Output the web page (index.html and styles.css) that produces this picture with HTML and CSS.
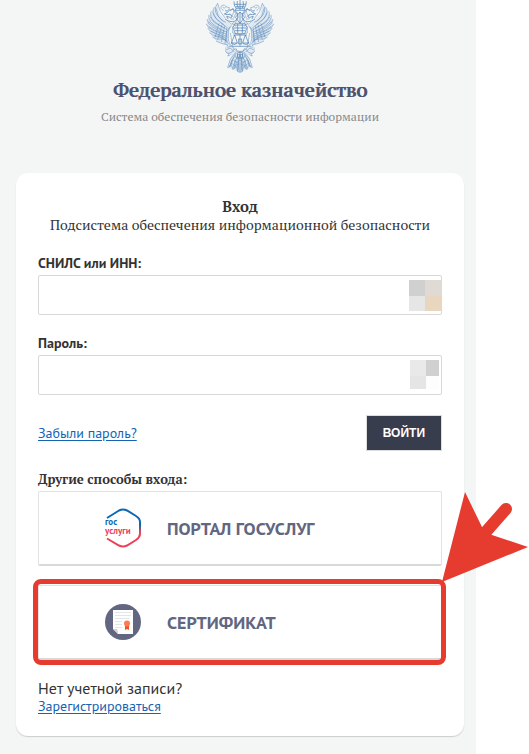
FILE: index.html
```html
<!DOCTYPE html>
<html lang="ru">
<head>
<meta charset="utf-8">
<meta name="viewport" content="width=device-width, initial-scale=1">
<title>Федеральное казначейство</title>
<link rel="stylesheet" href="styles.css">
</head>
<body>
<main class="page">
  <header class="header">
    <svg class="emblem" viewBox="48 0 204 219" aria-hidden="true">
      <defs>
        <g id="half">
          <path class="wash" d="M83 10 88 42 105 60 124 75 117 98 113 136Q88 132 76 121L59 97 50 72 62 43Z"/>
          <path d="M83 10Q69 27 82 46T108 67M83 10Q87 35 106 55M73 21Q63 38 77 54T111 82M64 33Q57 49 72 63T111 89M57 44Q53 60 70 73T111 97M51 57Q51 71 69 82T112 104M48 71Q52 83 70 91T113 111M53 84Q59 95 75 100T110 117M58 98Q68 108 82 108T109 124M67 111Q78 120 91 117T112 129M78 123Q92 131 114 135"/>
          <path d="M78 25 85 49 100 64M69 38 79 57 103 75M60 50 73 68 104 84M55 65 73 80 104 95M56 79 74 91 101 101M62 93 79 101 104 111M74 109 91 112 111 122M87 70 75 112M96 74 83 119M104 78 94 126M111 82 105 132"/>
          <path class="thick" d="M105 57Q116 65 127 65Q139 65 143 52Q146 41 138 34L129 28Q117 29 111 38L103 42 111 44Q119 41 126 47Q128 55 117 51L110 49 114 57"/>
          <path d="M111 38 106 30 113 33 117 26 122 32 129 24 132 34M117 42 123 43M129 33Q143 38 145 52L136 68M120 56 132 58M111 61 125 73 134 66M125 70 139 80M133 34 124 51M139 37 130 55"/>
          <path d="M101 31Q88 26 95 17Q104 11 108 20Q105 28 98 22M108 20 120 24"/>
          <path d="M126 77Q113 83 115 107Q113 127 126 139M119 81Q108 91 109 111T121 137M114 134Q104 143 107 155Q113 165 125 157L132 147M112 142 125 138 136 151M109 149 121 144 133 156M116 161 119 147M128 157 121 165 113 168 121 157"/>
          <path class="wash" d="M107 138 133 142 150 176V217L113 203 125 165 107 155Z"/>
          <path d="M140 154 121 177 113 203 125 196 129 209 139 199 143 215 150 217M139 159 128 180 123 196M144 162 135 188 132 207M149 166 142 194 143 214M131 170 119 199M136 178 129 205M133 164 142 178 150 166M130 181 139 187 150 181M124 189 134 197 148 192M126 179 119 201M140 184 136 203M146 186 147 215M107 155Q113 165 125 157L132 147M112 142 125 138 136 151M109 149 121 144 133 156"/>
        </g>
      </defs>
      <use href="#half"/>
      <use href="#half" transform="translate(300 0) scale(-1 1)"/>
      <g class="thick">
        <path d="M132 4Q131 16 138 25H163Q169 15 169 4M138 25 136 31H165L163 25M142 3Q139 14 145 24M159 3Q163 14 157 24M150 0V30M133 13H168M137 20H164"/>
        <path d="M150 36 164 52 150 70 136 52ZM150 36V70M135 70H165L171 83 164 101H136L129 83ZM134 75H166M132 84H168M135 92H165M143 72V99M157 72V99"/>
        <path d="M130 105H171M134 105 124 129H142L134 105M166 105 158 129H176L166 105M150 104V137M124 130Q133 137 142 130M158 130Q167 137 176 130M146 117H155V132H146ZM128 139H173M137 145 142 154H159L164 145M143 158H158V174H143ZM150 156V180M145 164H156"/>
      </g>
      <path d="M145 175V209M150 181V217M155 175V209M128 79V99L150 104 172 99V79M121 99 128 139M179 99 172 139"/>
    </svg>
    <h1 class="title">Федеральное казначейство</h1>
    <p class="subtitle">Система обеспечения безопасности информации</p>
  </header>

  <form class="card">
    <h2 class="card-title">Вход</h2>
    <p class="card-subtitle">Подсистема обеспечения информационной безопасности</p>

    <div class="field">
      <label class="label" for="login">СНИЛС или ИНН:</label>
      <div class="control">
        <input class="input" id="login" type="text">
        <svg class="mosaic mosaic-login" viewBox="0 0 33 31" aria-hidden="true">
          <path fill="#d0d0d0" d="M0 0h16v16H0z"/><path fill="#dfdad3" d="M16 0h17v16H16z"/>
          <path fill="#e6e6e6" d="M0 16h16v15H0z"/><path fill="#e9d6be" d="M16 16h17v15H16z"/>
        </svg>
      </div>
    </div>
    <div class="field">
      <label class="label" for="password">Пароль:</label>
      <div class="control">
        <input class="input" id="password" type="password">
        <svg class="mosaic mosaic-password" viewBox="0 0 29 29" aria-hidden="true">
          <path fill="#e9e9e9" d="M0 0h16v16H0z"/><path fill="#d0d0d0" d="M16 0h13v16H16z"/>
          <path fill="#e5e5e5" d="M0 16h16v13H0z"/><path fill="#fdfdfd" d="M16 16h13v13H16z"/>
        </svg>
      </div>
    </div>

    <div class="actions">
      <a class="link" href="#">Забыли пароль?</a>
      <button class="submit" type="submit">ВОЙТИ</button>
    </div>

    <h3 class="methods-title">Другие способы входа:</h3>
    <div class="methods">
      <button class="method" type="button">
        <svg class="method-icon" viewBox="0 0 36 40" aria-hidden="true">
          <defs>
            <linearGradient id="flag" x1="0" y1="0" x2="0" y2="1">
              <stop offset="0.42" stop-color="#0b68b1"/>
              <stop offset="0.6" stop-color="#ee3f58"/>
            </linearGradient>
          </defs>
          <path fill="none" stroke="url(#flag)" stroke-width="2" d="M2 10 14 2.500Q18 .5 22 2.500L31 8Q35 10.500 35 14V26Q35 29 31 32L22 37.500Q18 39.500 14 37.500L2 30.500"/>
          <text class="logo-text" x="0" y="17" fill="#0b68b1">гос</text>
          <text class="logo-text" x="0" y="26" fill="#ee3f58">услуги</text>
        </svg>
        <span>ПОРТАЛ ГОСУСЛУГ</span>
      </button>
      <div class="marked">
        <button class="method" type="button">
          <svg class="method-icon" viewBox="0 0 36 40" aria-hidden="true">
            <circle cx="18" cy="20" r="18" fill="#626680"/>
            <path fill="#fff" d="M8 8h20v24H13l-5-5z"/>
            <path stroke="#e3e6e9" d="M10 10.500h16M10 13.500h16M10 16.500h14M10 19.500h7M10 22.500h7M10 25.500h7"/>
            <path fill="#cfd3da" d="M8 27h4q1 1 1 5z"/>
            <path fill="#f0512e" d="M20 23h4v5l-2-1-2 1z"/>
            <circle cx="22" cy="21.500" r="3" fill="#ff7a50"/>
          </svg>
          <span>СЕРТИФИКАТ</span>
        </button>
        <span class="frame"></span>
        <svg class="arrow" viewBox="0 0 87 90" aria-hidden="true">
          <path fill="#e63c30" d="M0 90 23 0 40 35 50 43 86 55Z"/>
          <path stroke="#e63c30" stroke-width="12" stroke-linecap="round" d="M64 17 42 42"/>
        </svg>
      </div>
    </div>

    <p class="register-note">Нет учетной записи?</p>
    <a class="link register" href="#">Зарегистрироваться</a>
  </form>
</main>
</body>
</html>
```
FILE: styles.css
```css
* {
  box-sizing: border-box;
}

body {
  margin: 0;
  padding-right: 53px;
  background: #fff;
  color: #333;
  font-family: "PT Sans", "Noto Sans", sans-serif;
  font-size: 14px;
  line-height: 16px;
}

h1, h2, h3, p {
  margin: 0;
}

.page {
  padding: 0 12px 18px 16px;
  background: #f4f6f6;
}

.header {
  display: flex;
  flex-direction: column;
  align-items: center;
  padding-bottom: 46px;
  text-align: center;
}

.emblem {
  width: 68px;
  height: 73px;
  fill: none;
  stroke: #5b8abb;
  stroke-width: 1.5;
}

.emblem .thick {
  stroke: #4478b0;
  stroke-width: 2;
}

.emblem .wash {
  fill: #dfe8f1;
  stroke: none;
}

.title,
.subtitle,
.card-title,
.card-subtitle,
.methods-title {
  font-family: "PT Serif", "Liberation Serif", serif;
}

.title {
  margin-top: 4px;
  color: #4d536e;
  font-size: 20px;
  font-weight: 400;
  line-height: 26px;
  text-shadow: 1px 0 0 currentColor;
}

.subtitle {
  margin-top: 4px;
  color: #888;
  font-size: 12px;
  line-height: 20px;
}

.card {
  padding: 24px 22px 22px;
  border-radius: 12px;
  background: #fff;
  box-shadow: 0 1px 1px #ccc;
}

.card-title {
  font-size: 15px;
  line-height: 18px;
  text-align: center;
}

.card-subtitle {
  font-size: 14px;
  line-height: 20px;
  text-align: center;
}

.field {
  margin-top: 20px;
}

.label {
  display: block;
  margin-bottom: 4px;
  font-weight: 600;
}

.control {
  position: relative;
}

.input {
  display: block;
  width: 100%;
  height: 40px;
  padding: 0 12px;
  border: 1px solid #d8d8d8;
  border-radius: 2px;
  background: #fff;
  font: inherit;
}

.mosaic {
  position: absolute;
  top: 5px;
}

.mosaic-login {
  right: 0;
  width: 33px;
}

.mosaic-password {
  right: 3px;
  width: 29px;
}

.actions {
  display: flex;
  align-items: center;
  justify-content: space-between;
  margin-top: 20px;
}

.link {
  color: #1464b4;
  text-decoration: underline;
  text-underline-offset: 2px;
}

.submit {
  height: 36px;
  padding: 0 16px;
  border: 1px solid #ddd;
  background: #373d4d;
  color: #fff;
  font-family: "Liberation Sans", sans-serif;
  font-size: 12px;
  font-weight: 700;
}

.methods-title {
  margin: 20px 0 4px;
  font-size: 13px;
  line-height: 16px;
}

.methods {
  display: grid;
  gap: 19px;
}

.method {
  display: flex;
  align-items: center;
  gap: 26px;
  width: 100%;
  height: 75px;
  padding: 0 66px;
  border: 1px solid #e2e2e2;
  border-bottom: 2px solid #d8d8d8;
  border-radius: 2px;
  background: #fff;
  color: #626680;
  font-family: inherit;
  font-size: 18px;
  font-weight: 600;
}

.method-icon {
  width: 36px;
  height: 40px;
}

.logo-text {
  font-size: 9px;
  font-weight: 600;
}

.marked {
  position: relative;
}

.frame {
  position: absolute;
  inset: -6px -4px -5px -5px;
  border: 5px solid #e63c30;
  border-radius: 8px;
  pointer-events: none;
}

.arrow {
  position: absolute;
  top: -93px;
  left: 100%;
  width: 87px;
  height: 90px;
  pointer-events: none;
}

.register-note {
  margin-top: 18px;
  font-size: 16px;
  line-height: 20px;
}

.register {
  display: block;
  width: fit-content;
}
```
